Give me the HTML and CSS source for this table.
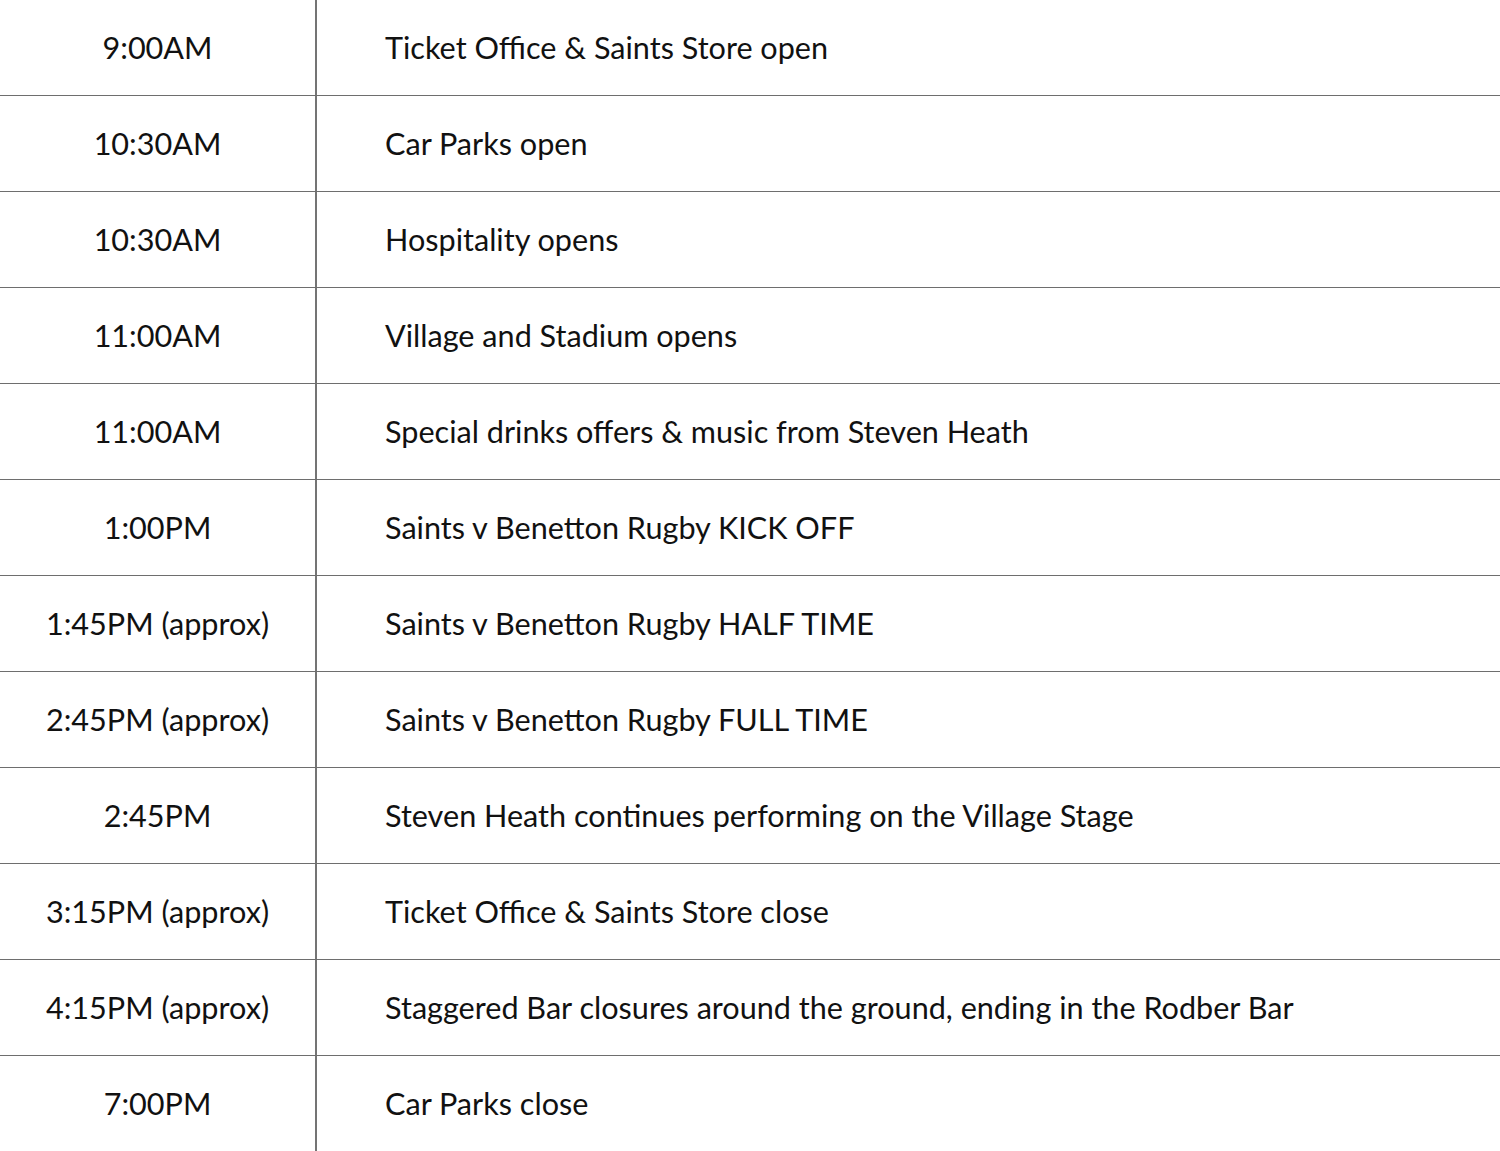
FILE: index.html
```html
<!DOCTYPE html>
<html>
<head>
<meta charset="utf-8">
<link rel="stylesheet" href="styles.css">
</head>
<body>
<div class="schedule">
<div class="row"><div class="time">9:00AM</div><div class="desc">Ticket Office &amp; Saints Store open</div></div>
<div class="row"><div class="time">10:30AM</div><div class="desc">Car Parks open</div></div>
<div class="row"><div class="time">10:30AM</div><div class="desc">Hospitality opens</div></div>
<div class="row"><div class="time">11:00AM</div><div class="desc">Village and Stadium opens</div></div>
<div class="row"><div class="time">11:00AM</div><div class="desc">Special drinks offers &amp; music from Steven Heath</div></div>
<div class="row"><div class="time">1:00PM</div><div class="desc">Saints v Benetton Rugby KICK OFF</div></div>
<div class="row"><div class="time">1:45PM (approx)</div><div class="desc">Saints v Benetton Rugby HALF TIME</div></div>
<div class="row"><div class="time">2:45PM (approx)</div><div class="desc">Saints v Benetton Rugby FULL TIME</div></div>
<div class="row"><div class="time">2:45PM</div><div class="desc">Steven Heath continues performing on the Village Stage</div></div>
<div class="row"><div class="time">3:15PM (approx)</div><div class="desc">Ticket Office &amp; Saints Store close</div></div>
<div class="row"><div class="time">4:15PM (approx)</div><div class="desc">Staggered Bar closures around the ground, ending in the Rodber Bar</div></div>
<div class="row last"><div class="time">7:00PM</div><div class="desc">Car Parks close</div></div>
</div>
</body>
</html>
```

FILE: styles.css
```css
html, body {
  margin: 0;
  padding: 0;
  background: #fff;
}
.schedule {
  width: 1500px;
  font-family: Lato, "Open Sans", sans-serif;
  font-size: 30.6px;
  color: #111;
}
.row {
  display: grid;
  grid-template-columns: 317px 1fr;
  height: 96px;
  box-sizing: border-box;
  border-bottom: 1px solid #6e6e6e;
}
.row.last {
  height: 95px;
  border-bottom: none;
}
.time {
  display: flex;
  align-items: center;
  justify-content: center;
  border-right: 2px solid #747474;
  box-sizing: border-box;
}
.desc {
  display: flex;
  align-items: center;
  padding-left: 68px;
}
```
